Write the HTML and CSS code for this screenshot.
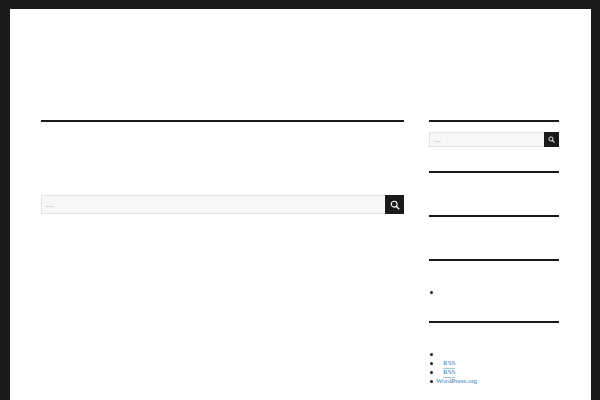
FILE: index.html
```html
<html>
    <head>
        <title>Search</title>
        <link rel="stylesheet" href="styles.css">
    </head>
    <body>
        <div class="site">
            <div class="content">
                <div class="main">
                    <form class="search">
                        <input class="field" type="text" placeholder="…">
                        <button class="btn" type="button">
                            <svg width="10" height="10" viewBox="0 0 24 24"><circle cx="10" cy="10" r="7" fill="none" stroke="#fff" stroke-width="2.6"/><path d="M15 15l7 7" stroke="#fff" stroke-width="3.2"/></svg>
                        </button>
                    </form>
                </div>
                <div class="side">
                    <div class="widget first">
                        <form class="search small">
                            <input class="field" type="text" placeholder="…">
                            <button class="btn" type="button">
                                <svg width="7" height="7" viewBox="0 0 24 24"><circle cx="10" cy="10" r="7" fill="none" stroke="#fff" stroke-width="3"/><path d="M15 15l7 7" stroke="#fff" stroke-width="3.6"/></svg>
                            </button>
                        </form>
                    </div>
                    <div class="widget"></div>
                    <div class="widget"></div>
                    <div class="widget third">
                        <ul><li></li></ul>
                    </div>
                    <div class="widget last">
                        <ul>
                            <li></li>
                            <li><a class="rss" href="#">RSS</a></li>
                            <li><a class="rss" href="#">RSS</a></li>
                            <li><a href="#">WordPress.org</a></li>
                        </ul>
                    </div>
                </div>
            </div>
        </div>
    </body>
</html>
```

FILE: styles.css
```css
*{
    margin: 0;
    padding: 0;
    box-sizing: border-box;
}
body{
    background: #1a1a1a;
    padding: 9px 9px 0 10px;
    height: 400px;
    overflow: hidden;
    font-family: "Liberation Serif", serif;
    font-size: 7px;
    line-height: 9px;
    color: #1a1a1a;
}
.site{
    background: #fff;
    height: 391px;
    padding: 111px 32px 0 31px;
}
.content{
    display: flex;
    gap: 25px;
}
.main{
    width: 363px;
    border-top: 2px solid #1a1a1a;
    padding-top: 73px;
}
.side{
    width: 130px;
}
.search{
    display: flex;
    height: 19px;
}
.field{
    flex: 1;
    min-width: 0;
    background: #f7f7f7;
    border: 1px solid #e2e2e2;
    border-right: 0;
    padding: 0 4px;
    font-family: inherit;
    font-size: 7px;
    outline: 0;
}
.field::placeholder{
    color: #777;
}
.btn{
    width: 19px;
    border: 0;
    background: #1a1a1a;
    display: flex;
    align-items: center;
    justify-content: center;
}
.small{
    height: 15px;
}
.small .btn{
    width: 15px;
}
.widget{
    border-top: 2px solid #1a1a1a;
    height: 44px;
}
.first{
    height: 51px;
    padding-top: 10px;
}
.third{
    height: 62px;
    padding-top: 27px;
}
.last{
    padding-top: 27px;
    height: auto;
}
ul{
    list-style: none;
}
li{
    display: flex;
    align-items: center;
    height: 9px;
}
li::before{
    content: "";
    width: 3px;
    height: 3px;
    border-radius: 50%;
    background: #1a1a1a;
    margin-left: 1px;
    margin-right: 3px;
}
a{
    color: #1f7fb8;
    text-decoration: none;
}
.rss{
    margin-left: 7px;
    border-bottom: 1px solid #9cc9e4;
    height: 10px;
    margin-top: 1px;
}
```
